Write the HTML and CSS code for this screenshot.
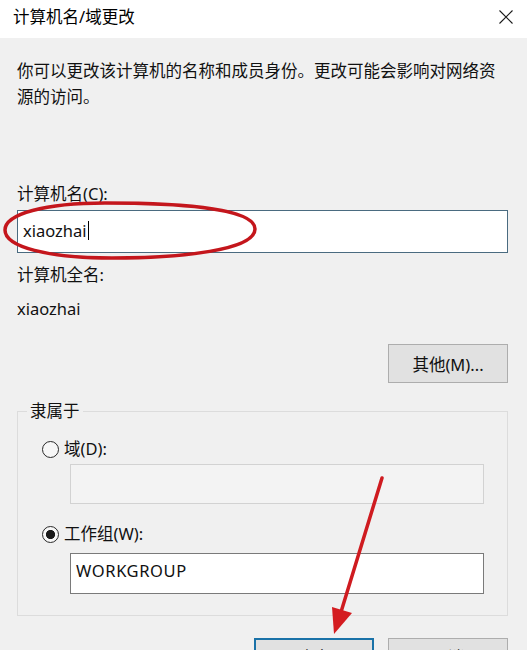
FILE: index.html
```html
<!DOCTYPE html>
<html lang="zh-CN">
<head>
<meta charset="utf-8">
<title>计算机名/域更改</title>
<link rel="stylesheet" href="styles.css">
</head>
<body>
<div class="dialog">
  <header class="titlebar">
    <span class="title">计算机名/域更改</span>
    <svg class="close" width="14" height="14" viewBox="0 0 14 14" aria-hidden="true"><path d="M0.5 0.5 L13.5 13.5 M13.5 0.5 L0.5 13.5" stroke="#1a1a1a" stroke-width="1.1" fill="none"/></svg>
  </header>
  <main class="content">
    <p class="desc">你可以更改该计算机的名称和成员身份。更改可能会影响对网络资源的访问。</p>
    <div class="label name-label">计算机名(C):</div>
    <div class="textbox focused"><span class="value">xiaozhai</span><span class="caret"></span></div>
    <div class="label full-label">计算机全名:</div>
    <div class="label full-value">xiaozhai</div>
    <div class="more-row"><button class="btn">其他(M)...</button></div>
    <fieldset class="group">
      <legend>隶属于</legend>
      <div class="radio-row first"><span class="radio"></span><span>域(D):</span></div>
      <div class="textbox disabled sub"></div>
      <div class="radio-row second"><span class="radio checked"></span><span>工作组(W):</span></div>
      <div class="textbox sub wg">WORKGROUP</div>
    </fieldset>
    <div class="actions"><button class="btn primary">确定</button><button class="btn">取消</button></div>
  </main>
  <svg class="annot" width="527" height="650" viewBox="0 0 527 650" aria-hidden="true">
    <path d="M255 229 C255 207 170 203 105 203 C45 203 5 214 5 230 C5 247 48 258 112 258 C182 258 255 250 255 229 Z" fill="none" stroke="#c4161c" stroke-width="3.5"/>
    <line x1="382" y1="478" x2="341" y2="612" stroke="#cf1b20" stroke-width="3.5" stroke-linecap="round"/>
    <polygon points="332,607 352,613 334,634" fill="#d41c20"/>
  </svg>
</div>
</body>
</html>
```
FILE: styles.css
```css
html, body {
  margin: 0;
  padding: 0;
}

body {
  width: 527px;
  height: 650px;
  overflow: hidden;
  background: #f0f0f0;
  font-family: "Noto Sans", "Noto Sans CJK SC", sans-serif;
  font-size: 16.5px;
  color: #111111;
}

.dialog {
  position: relative;
  width: 527px;
  height: 650px;
  overflow: hidden;
}

.titlebar {
  height: 38px;
  box-sizing: border-box;
  background: #ffffff;
  display: flex;
  align-items: center;
  justify-content: space-between;
  padding: 0 14px 4px 13px;
}

.title {
  line-height: 22px;
  color: #000;
}

.close {
  display: block;
}

.content {
  padding: 0 19px 0 17px;
}

.desc {
  margin: 20px 0 0;
  line-height: 26px;
}

.label {
  line-height: 22px;
}

.name-label {
  margin-top: 73px;
}

.textbox {
  box-sizing: border-box;
  background: #ffffff;
  border: 1px solid #7a7a7a;
  display: flex;
  align-items: center;
  padding-left: 5px;
}

.focused {
  height: 43px;
  margin-top: 5px;
  border-color: #4a6b80;
  padding-bottom: 2px;
}

.caret {
  width: 1px;
  height: 19px;
  background: #000;
  margin-left: 1px;
}

.full-label {
  margin-top: 11px;
}

.full-value {
  margin-top: 12px;
}

.more-row {
  display: flex;
  justify-content: flex-end;
  margin-top: 24px;
}

.btn {
  width: 120px;
  height: 39px;
  box-sizing: border-box;
  background: #e1e1e1;
  border: 1px solid #adadad;
  font: inherit;
  color: #111111;
  padding: 0;
  margin: 0;
}

.group {
  margin: 17px 0 0;
  padding: 0 0 21px 0;
  border: 1px solid #dcdcdc;
  min-width: 0;
}

.group legend {
  margin-left: 9px;
  padding: 0 3px;
  line-height: 22px;
}

.radio-row {
  display: flex;
  align-items: center;
  gap: 5px;
  line-height: 22px;
  margin-left: 24px;
}

.radio-row.first {
  margin-top: 16px;
}

.radio-row.second {
  margin-top: 19px;
}

.radio {
  width: 17px;
  height: 17px;
  box-sizing: border-box;
  border: 1px solid #2a2a2a;
  border-radius: 50%;
  background: #f7f7f7;
}

.radio.checked {
  border-width: 1.5px;
  background: radial-gradient(circle, #1a1a1a 0 4.3px, #f7f7f7 4.8px);
}

.textbox.sub {
  margin: 4px 23px 0 52px;
  height: 40px;
}

.textbox.disabled {
  background: #f3f3f3;
  border-color: #d2d2d2;
}

.textbox.wg {
  margin-top: 8px;
  height: 41px;
  padding-bottom: 6px;
  letter-spacing: 0.6px;
}

.actions {
  display: flex;
  justify-content: flex-end;
  gap: 14px;
  margin-top: 22px;
}

.actions .btn {
  height: 38px;
}

.btn.primary {
  border: 2px solid #1a72a8;
}

.annot {
  position: absolute;
  top: 0;
  left: 0;
  pointer-events: none;
}
```
